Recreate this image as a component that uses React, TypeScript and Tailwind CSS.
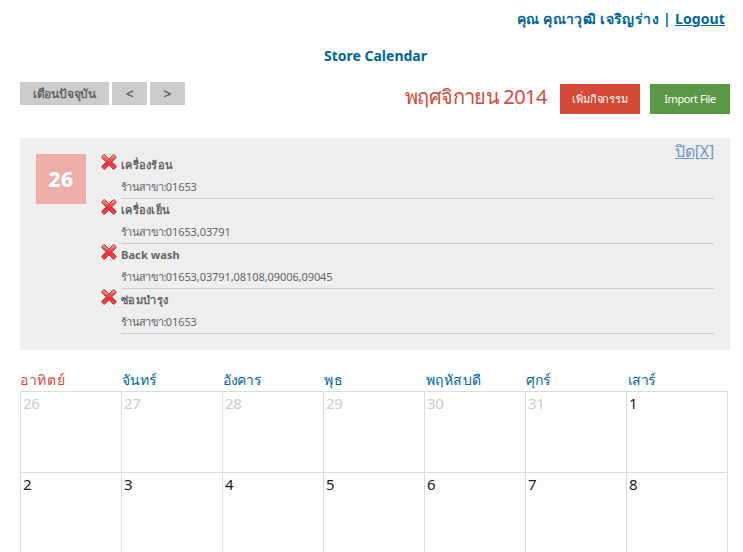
const events = [
  { title: 'เครื่องร้อน', stores: '01653', cls: 'tracking-[0.25px]' },
  { title: 'เครื่องเย็น', stores: '01653,03791', cls: 'tracking-[0.3px]' },
  { title: 'Back wash', stores: '01653,03791,08108,09006,09045', cls: 'tracking-[0.1px]' },
  { title: 'ซ่อมบำรุง', stores: '01653', cls: 'tracking-[0.4px]' },
];

const days = [
  { name: 'อาทิตย์', cls: 'tracking-[0.7px] text-[#d64937]' },
  { name: 'จันทร์', cls: 'pl-px tracking-[-0.1px]' },
  { name: 'อังคาร', cls: 'pl-px tracking-[-0.3px]' },
  { name: 'พุธ', cls: 'pl-px tracking-[0.5px]' },
  { name: 'พฤหัสบดี', cls: 'pl-[1.5px] tracking-[0.5px]' },
  { name: 'ศุกร์', cls: 'pl-px' },
  { name: 'เสาร์', cls: 'pl-[1.5px] tracking-[-0.5px]' },
];
const dates = [26, 27, 28, 29, 30, 31, 1, 2, 3, 4, 5, 6, 7, 8];

function DeleteIcon() {
  return (
    <svg width="18" height="18" viewBox="0 0 18 18" className="-mt-px -ml-px block">
      <defs>
        <linearGradient id="cross" x1="0" y1="0" x2="0" y2="1">
          <stop offset="0" stopColor="#f77d78" />
          <stop offset="0.45" stopColor="#f04545" />
          <stop offset="0.55" stopColor="#ee2c33" />
          <stop offset="1" stopColor="#ff4a50" />
        </linearGradient>
      </defs>
      <path
        d="M3.6 1.9Q4.3 1.4 5 2L9 6.2 12.9 2Q13.6 1.4 14.3 1.9L15.9 3.4Q16.4 4.1 15.9 4.8L11.6 9 15.9 13Q16.5 13.7 15.9 14.4L14.3 15.9Q13.6 16.5 12.9 15.9L9 11.8 5 15.9Q4.3 16.5 3.6 15.9L2 14.4Q1.5 13.7 2 13L6.3 9 2 4.8Q1.5 4.1 2 3.4Z"
        fill="url(#cross)"
        stroke="#9c3b38"
        strokeWidth="1"
        strokeLinejoin="round"
      />
      <path d="M3 3.8 4.3 2.8 7.5 6.1M11 5.6 13.6 2.8 14.7 3.8" fill="none" stroke="#f9b3ae" strokeWidth="0.9" />
    </svg>
  );
}

export default function App() {
  return (
    <div className="h-[552px] w-[743px] overflow-hidden bg-white pr-[13px] pl-5 font-['Noto_Sans',sans-serif] text-[#666]">
      <div className="flex h-[38px] items-center justify-end pr-[5px] pb-[2px] text-[14px] font-bold whitespace-pre text-[#069]">
        <span className="tracking-[0.38px]">คุณ คุณาวุฒิ เจริญร่าง | </span>
        <a className="tracking-[0.1px] underline">Logout</a>
      </div>
      <h1 className="mt-2 h-5 pl-px text-center text-[14px] leading-5 font-bold text-[#069]">Store Calendar</h1>
      <div className="mt-4 flex h-[32px] items-start">
        <div className="flex gap-[3px] text-[12px] font-bold">
          <button className="h-[23px] w-[89px] bg-[#ccc] tracking-[-0.2px]">เดือนปัจจุบัน</button>
          <button className="h-[23px] w-[35px] bg-[#ccc] text-[14px] leading-[23px]">&lt;</button>
          <button className="h-[23px] w-[35px] bg-[#ccc] text-[14px] leading-[23px]">&gt;</button>
        </div>
        <div className="mr-[13px] ml-auto flex gap-[4px] text-[20px] leading-[30px] text-[#d64937]">
          <span className="tracking-[-0.6px]">พฤศจิกายน</span>
          <span className="tracking-[-0.5px]">2014</span>
        </div>
        <button className="mt-[2px] h-[30px] w-20 bg-[#d64937] text-[11px] tracking-[-0.2px] text-white">เพิ่มกิจกรรม</button>
        <button className="mt-[2px] ml-[10px] h-[30px] w-20 bg-[#5b9845] text-[11px] tracking-[-0.45px] text-white">Import File</button>
      </div>
      <section className="mt-6 flex h-[212px] bg-[#eee] pt-4 pr-4 pl-4">
        <div className="flex size-[50px] items-center justify-center bg-[#ecaea6] pt-px text-[21px] font-extrabold tracking-[0.3px] text-white">26</div>
        <ul className="ml-[15px] flex-1">
          {events.map((event, i) => (
            <li key={event.title} className="flex h-[45px]">
              <div className="w-5">
                <DeleteIcon />
              </div>
              <div className="relative flex-1 border-b border-[#ccc] text-[11px]">
                <div className={`h-[22px] leading-[22px] font-bold ${event.cls}`}>{event.title}</div>
                <div className="flex h-[22px] leading-[22px]">
                  <span className="tracking-[-0.65px]">ร้านสาขา:</span>
                  <span className="tracking-[-0.08px]">{event.stores}</span>
                </div>
                {i === 0 && (
                  <a className="absolute -top-[14px] right-0 text-[16px] leading-[22px] tracking-[-0.2px] text-[#6d96c4] underline">ปิด[X]</a>
                )}
              </div>
            </li>
          ))}
        </ul>
      </section>
      <div className="mt-[19px] grid h-[22px] w-[707px] grid-cols-[repeat(7,101px)] text-[14px] leading-[21px] text-[#069]">
        {days.map((day) => (
          <div key={day.name} className={day.cls}>{day.name}</div>
        ))}
      </div>
      <div className="grid w-[708px] grid-cols-[repeat(7,101px)] border-t border-l border-[#ddd]">
        {dates.map((date, i) => (
          <div
            key={date + '-' + i}
            className={`h-[81px] border-r border-b border-[#ddd] pt-px pl-[2px] text-[15px] leading-[20px] tracking-[-0.3px] ${i < 6 ? 'text-[#ccc]' : 'text-[#222]'}`}
          >
            {date}
          </div>
        ))}
      </div>
    </div>
  );
}
